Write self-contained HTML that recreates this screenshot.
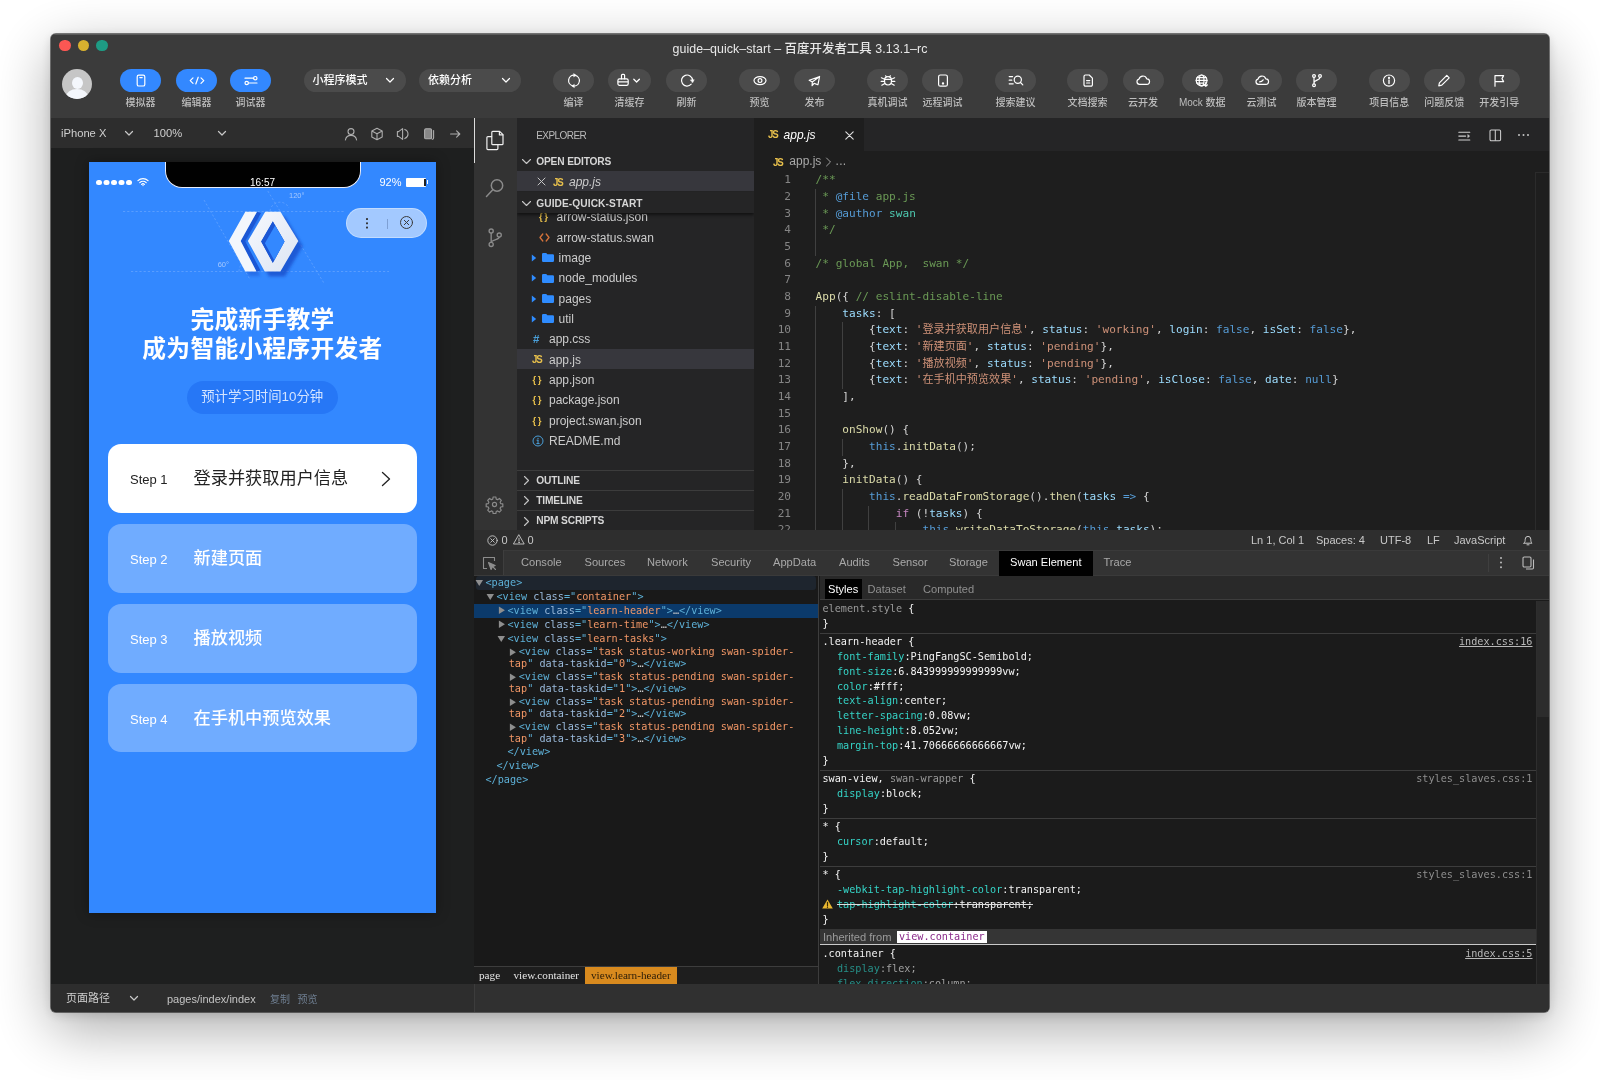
<!DOCTYPE html>
<html lang="zh-CN">
<head>
<meta charset="utf-8">
<title>guide-quick-start – 百度开发者工具 3.13.1-rc</title>
<style>
*{box-sizing:border-box;margin:0;padding:0}
html,body{width:1600px;height:1080px;overflow:hidden;background:#fff}
body{font-family:"Liberation Sans","Noto Sans CJK SC",sans-serif;position:relative;-webkit-font-smoothing:antialiased}
.abs{position:absolute}
#win{position:absolute;left:51px;top:34px;width:1497.500px;height:978px;border-radius:5px;background:#1e1e1e;
 box-shadow:0 0 0 1px rgba(0,0,0,.5),0 17px 58px rgba(0,0,0,.34),0 3px 12px rgba(0,0,0,.14);overflow:hidden;will-change:transform;opacity:.9999}
#win>div{position:absolute}
/* coordinates inside #win are page coords minus (51,34) */
#top{left:0;top:0;width:1498px;height:84px;background:#3b3b3b;box-shadow:inset 0 1px 0 #5a5a5a}
.tl{position:absolute;top:5.5px;width:11.5px;height:11.5px;border-radius:50%}
#title{position:absolute;left:0;width:1498px;top:7.500px;text-align:center;font-size:12.400px;font-weight:500;color:#e8e8e8;line-height:14px;letter-spacing:.06px}
.pill{position:absolute;top:35px;height:23px;border-radius:12px;background:#4b4b4b}
.pill.blue{background:#3388ff}
.pill svg{position:absolute;left:50%;top:50%;transform:translate(-50%,-50%) translateY(-.4px)}
.plab{position:absolute;top:61.700px;width:80px;margin-left:-40px;text-align:center;font-size:10px;font-weight:500;line-height:13px;color:#bdbdbd;white-space:nowrap}
.dd{position:absolute;top:35px;height:23px;width:102px;border-radius:12px;background:#4b4b4b;color:#fff;font-size:11px;font-weight:500;line-height:22.500px;padding-left:9px}
.dd svg{position:absolute;right:10.500px;top:8px}

.sbt{top:8px;font-size:11.200px;line-height:14px;color:#cfcfcf;white-space:nowrap}
#phone{position:absolute;left:38px;top:14px;width:347px;height:751px;background:#3388ff;overflow:hidden;box-shadow:0 0 12px rgba(0,0,0,.35)}
#lh{position:absolute;left:0;top:144.300px;width:347px;text-align:center;color:#fff;font-weight:700;font-size:23.750px;line-height:28.400px;letter-spacing:.28px;font-family:"Liberation Sans","Noto Sans CJK SC",sans-serif}
#lt{position:absolute;left:98px;top:219px;width:150.500px;height:33px;border-radius:16.500px;background:#2677f6;color:#d4e4ff;font-size:13.400px;line-height:32px;text-align:center;white-space:nowrap}
.task{position:absolute;left:19px;width:308.500px;height:68.300px;border-radius:13px;background:rgba(255,255,255,.3);color:#fff}
.task.work{background:#fff;color:#222}
.task:not(.work) .tt{font-weight:500}
.task .st{position:absolute;left:22px;top:0;font-size:13px;line-height:71px;white-space:nowrap}
.task .tt{position:absolute;left:85.500px;top:0;font-size:17.200px;line-height:69px;white-space:nowrap}

/*EDCSS*/
.fn{font-size:12px;line-height:16px;color:#cccccc;white-space:nowrap}
.fi{line-height:14px;white-space:nowrap;font-family:"Liberation Sans",sans-serif}
.sh{font-size:10.200px;font-weight:700;line-height:13px;color:#d6d6d6;white-space:nowrap;letter-spacing:-.15px}
.ln,.cl{position:absolute;font-family:"DejaVu Sans Mono","Liberation Mono","Noto Sans CJK SC",monospace;font-size:11.100px;line-height:16.660px;height:16.660px;white-space:pre;color:#d4d4d4}
.ln{left:0;width:37px;text-align:right;color:#858585}
.cl{left:61.600px}
.cl .c{color:#6a9955}.cl .b{color:#569cd6}.cl .t{color:#4ec9b0}.cl .f{color:#dcdcaa}.cl .v{color:#9cdcfe}.cl .s{color:#ce9178}.cl .m{color:#c586c0}
.stt{top:3px;font-size:11px;line-height:14px;color:#c8c8c8;white-space:nowrap}
/*/EDCSS*/

/*DVCSS*/
.dt{top:5.300px;font-size:11.100px;line-height:14px;color:#a9a9a9;white-space:nowrap}
.dt2{top:32px;font-size:11.100px;line-height:14px;color:#8f8f8f;white-space:nowrap}
.el,.sl{font-family:"DejaVu Sans Mono","Liberation Mono",monospace;font-size:10.180px;white-space:pre}
.el{line-height:12.030px;color:#5db0d7}
.el .tg{color:#5db0d7}.el .an{color:#9bbbdc}.el .av{color:#f29766}.el .dd3{color:#c8c8c8}
.sl{line-height:14.800px;height:14.800px;color:#e6e6e6}
.sl .pn{color:#35d4c7}.sl .pv{color:#f4f4f4}.sl .gs{color:#9a9a9a}.sl .pnd{color:#268f88}.sl .pvd{color:#a0a0a0}
.bc{font-family:"Liberation Serif",serif;font-size:11.200px;line-height:14px;color:#e6e6e6;white-space:nowrap}
/*/DVCSS*/
</style>
</head>
<body>
<div id="win">
<!-- TOPBAR -->
<div id="top">
  <div class="tl" style="left:8px;background:#fc5753"></div>
  <div class="tl" style="left:26.5px;background:#d8b12f"></div>
  <div class="tl" style="left:45px;background:#1e9b84"></div>
  <div id="title">guide–quick–start – 百度开发者工具 3.13.1–rc</div>
  <!--TB--><div class="abs" style="left:11px;top:35px;width:30px;height:30px;border-radius:50%;background:#c6c6c6;overflow:hidden"><div class="abs" style="left:9.5px;top:8px;width:11px;height:12px;border-radius:50%;background:#f4f7fc"></div><div class="abs" style="left:4px;top:19.500px;width:22px;height:16px;border-radius:50% 50% 0 0;background:#f4f7fc"></div></div>
  <div class="pill blue" style="left:69px;width:41px"><svg width="16" height="16" viewBox="0 0 16 16" stroke="#fff" stroke-width="1.2" fill="none" stroke-linecap="round" stroke-linejoin="round"><rect x="4.2" y="2.6" width="7.6" height="10.8" rx="1.6"/><path d="M6.8 5h2.4"/></svg></div><div class="plab" style="left:89.5px">模拟器</div>
  <div class="pill blue" style="left:125px;width:41px"><svg width="18" height="16" viewBox="0 0 18 16" stroke="#fff" stroke-width="1.2" fill="none" stroke-linecap="round" stroke-linejoin="round" stroke-width="1.4"><path d="M5 5.2L2.2 8 5 10.8M13 5.2L15.800 8 13 10.8M10.2 4.600L7.800 11.400"/></svg></div><div class="plab" style="left:145.5px">编辑器</div>
  <div class="pill blue" style="left:179px;width:41px"><svg width="18" height="16" viewBox="0 0 18 16" stroke="#fff" stroke-width="1.2" fill="none" stroke-linecap="round" stroke-linejoin="round" stroke-width="1.3"><path d="M3 5.600h8.600M6.400 10.400H15"/><circle cx="13.300" cy="5.600" r="1.700"/><circle cx="4.700" cy="10.400" r="1.700"/></svg></div><div class="plab" style="left:199.5px">调试器</div>
  <div class="dd" style="left:252.5px">小程序模式<svg width="10" height="7" viewBox="0 0 10 7" stroke="#fff" stroke-width="1.200" fill="none" stroke-linecap="round" stroke-linejoin="round"><path d="M1.500 1.500L5 5l3.500-3.500"/></svg></div>
  <div class="dd" style="left:368px">依赖分析<svg width="10" height="7" viewBox="0 0 10 7" stroke="#fff" stroke-width="1.200" fill="none" stroke-linecap="round" stroke-linejoin="round"><path d="M1.500 1.500L5 5l3.500-3.500"/></svg></div>
  <div class="pill" style="left:502px;width:41px"><svg width="16" height="16" viewBox="0 0 16 16" stroke="#fff" stroke-width="1.2" fill="none" stroke-linecap="round" stroke-linejoin="round" stroke-width="1.100"><path d="M6.600 13.200A5.400 5.400 0 0 1 8.400 2.600M9.400 2.800A5.400 5.400 0 0 1 7.600 13.400"/><path d="M7.900 1.100L10.200 2.700 7.900 4.100zM8.100 11.900L5.800 13.300 8.100 14.900z" fill="#fff" stroke-width=".5"/></svg></div><div class="plab" style="left:522.5px">编译</div>
  <div class="pill" style="left:557px;width:43px"><svg width="26" height="16" viewBox="0 0 26 16" stroke="#fff" stroke-width="1.2" fill="none" stroke-linecap="round" stroke-linejoin="round" stroke-width="1.100"><path d="M4.500 6.200V2.700a.9 .9 0 0 1 .9-.9h1.300a.9 .9 0 0 1 .9 .9V6.200"/><rect x=".9" y="6.200" width="10.300" height="6.600" rx="1.600"/><path d="M1.200 9.200h9.700"/><path d="M16.800 6.600l2.800 2.800 2.800-2.800" stroke-width="1.300"/></svg></div><div class="plab" style="left:578.5px">清缓存</div>
  <div class="pill" style="left:615px;width:41px"><svg width="16" height="16" viewBox="0 0 16 16" stroke="#fff" stroke-width="1.2" fill="none" stroke-linecap="round" stroke-linejoin="round" stroke-width="1.100"><path d="M12.200 11.500A5.500 5.500 0 1 1 13.500 7.600"/><path d="M11.600 7.300L15.200 7.100 13.700 10z" fill="#fff" stroke-width=".5"/></svg></div><div class="plab" style="left:635.5px">刷新</div>
  <div class="pill" style="left:688px;width:41px"><svg width="18" height="16" viewBox="0 0 18 16" stroke="#fff" stroke-width="1.2" fill="none" stroke-linecap="round" stroke-linejoin="round" stroke-width="1.050"><ellipse cx="9" cy="8" rx="6" ry="4"/><circle cx="9" cy="8" r="1.900"/></svg></div><div class="plab" style="left:708.5px">预览</div>
  <div class="pill" style="left:743px;width:41px"><svg width="16" height="16" viewBox="0 0 16 16" stroke="#fff" stroke-width="1.2" fill="none" stroke-linecap="round" stroke-linejoin="round" stroke-width="1.050"><path d="M12.600 3.900L2.200 7.700l3.100 1.800-.2 3.500 2-2.300 3.800 1.500zM5.300 9.500l7.300-5.600"/></svg></div><div class="plab" style="left:763.5px">发布</div>
  <div class="pill" style="left:816px;width:41px"><svg width="18" height="16" viewBox="0 0 18 16" stroke="#fff" stroke-width="1.2" fill="none" stroke-linecap="round" stroke-linejoin="round"><path d="M5.600 7.400A3.400 3.400 0 0 1 12.400 7.400V9A3.400 3.400 0 0 1 5.600 9zM5.800 6.800h6.400M6.600 3.200l1 1.200M11.400 3.200l-1 1.200M2.400 5.200l3.200 1.400M15.600 5.200l-3.200 1.400M2.200 8.800h3.400M15.800 8.800h-3.400M2.800 12.600l3-1.800M15.200 12.600l-3-1.800"/></svg></div><div class="plab" style="left:836.5px">真机调试</div>
  <div class="pill" style="left:871px;width:41px"><svg width="16" height="16" viewBox="0 0 16 16" stroke="#fff" stroke-width="1.2" fill="none" stroke-linecap="round" stroke-linejoin="round"><rect x="3.600" y="2.400" width="8.800" height="11.200" rx="1.800"/><circle cx="8" cy="10.800" r=".6" fill="#fff"/></svg></div><div class="plab" style="left:891.5px">远程调试</div>
  <div class="pill" style="left:944px;width:41px"><svg width="18" height="16" viewBox="0 0 18 16" stroke="#fff" stroke-width="1.2" fill="none" stroke-linecap="round" stroke-linejoin="round"><circle cx="10.800" cy="7.200" r="3.600"/><path d="M13.500 9.900l2.300 2.300M2.200 4h3.400M2.200 7.600h2.600M2.200 11.200h4"/></svg></div><div class="plab" style="left:964.5px">搜索建议</div>
  <div class="pill" style="left:1016px;width:41px"><svg width="16" height="16" viewBox="0 0 16 16" stroke="#fff" stroke-width="1.2" fill="none" stroke-linecap="round" stroke-linejoin="round"><path d="M4 3.800A1.400 1.400 0 0 1 5.400 2.400h3.800L12.400 5.600v6.600a1.400 1.400 0 0 1-1.400 1.400H5.400A1.400 1.400 0 0 1 4 12.200z"/><path d="M6.600 8h3.200M6.600 10.400h3.200"/></svg></div><div class="plab" style="left:1036.5px">文档搜索</div>
  <div class="pill" style="left:1071.5px;width:41px"><svg width="18" height="16" viewBox="0 0 18 16" stroke="#fff" stroke-width="1.2" fill="none" stroke-linecap="round" stroke-linejoin="round"><path d="M5.400 11.800A2.700 2.700 0 0 1 5 6.500 4 4 0 0 1 12.700 6.200 2.800 2.800 0 0 1 12.800 11.800z"/></svg></div><div class="plab" style="left:1092.0px">云开发</div>
  <div class="pill" style="left:1130.75px;width:41px"><svg width="18" height="16" viewBox="0 0 18 16" stroke="#fff" stroke-width="1.2" fill="none" stroke-linecap="round" stroke-linejoin="round"><circle cx="8.600" cy="7.800" r="5.400"/><ellipse cx="8.600" cy="7.800" rx="2.400" ry="5.400"/><path d="M3.200 7.800h10.800M4 5h9.200M4 10.600h6.500M12.800 9.500v4.200M11.200 12.200l1.600 1.600 1.600-1.600" /></svg></div><div class="plab" style="left:1151.25px">Mock 数据</div>
  <div class="pill" style="left:1190px;width:41px"><svg width="18" height="16" viewBox="0 0 18 16" stroke="#fff" stroke-width="1.2" fill="none" stroke-linecap="round" stroke-linejoin="round"><path d="M5.400 11.800A2.700 2.700 0 0 1 5 6.500 4 4 0 0 1 12.700 6.200 2.800 2.800 0 0 1 12.800 11.800z"/><path d="M6.600 9.200c1.400 0 2.600-.6 3.600-2" /></svg></div><div class="plab" style="left:1210.5px">云测试</div>
  <div class="pill" style="left:1245px;width:41px"><svg width="16" height="16" viewBox="0 0 16 16" stroke="#fff" stroke-width="1.2" fill="none" stroke-linecap="round" stroke-linejoin="round"><circle cx="5" cy="3.400" r="1.400"/><circle cx="11" cy="3.400" r="1.400"/><circle cx="5" cy="12.600" r="1.400"/><path d="M5 4.800v6.400M11 4.800c0 3-6 2.400-6 5.400"/></svg></div><div class="plab" style="left:1265.5px">版本管理</div>
  <div class="pill" style="left:1317.75px;width:41px"><svg width="16" height="16" viewBox="0 0 16 16" stroke="#fff" stroke-width="1.2" fill="none" stroke-linecap="round" stroke-linejoin="round"><circle cx="8" cy="8" r="5.600"/><path d="M8 7.400v3.400" stroke-width="1.400"/><circle cx="8" cy="5.300" r=".5" fill="#fff"/></svg></div><div class="plab" style="left:1338.25px">项目信息</div>
  <div class="pill" style="left:1372.75px;width:41px"><svg width="16" height="16" viewBox="0 0 16 16" stroke="#fff" stroke-width="1.2" fill="none" stroke-linecap="round" stroke-linejoin="round"><path d="M10.800 2.800l2.400 2.400-7.400 7.400-3 .6.600-3z"/></svg></div><div class="plab" style="left:1393.25px">问题反馈</div>
  <div class="pill" style="left:1427.75px;width:41px"><svg width="16" height="16" viewBox="0 0 16 16" stroke="#fff" stroke-width="1.2" fill="none" stroke-linecap="round" stroke-linejoin="round"><path d="M4 13.600V3h8.600l-1.600 3 1.600 3H4"/></svg></div><div class="plab" style="left:1448.25px">开发引导</div><!--/TB-->
  
  
  
</div>
<!--SIM-->
<div id="simbar" style="left:0;top:84px;width:423px;height:30px;background:#2d2d2d">
  <span class="abs sbt" style="left:10px">iPhone X</span>
  <svg class="abs" style="left:73px;top:11.500px" width="10" height="7" viewBox="0 0 10 7" stroke="#c8c8c8" stroke-width="1.200" fill="none" stroke-linecap="round" stroke-linejoin="round"><path d="M1.500 1.500L5 5l3.500-3.500"/></svg>
  <span class="abs sbt" style="left:102.500px">100%</span>
  <svg class="abs" style="left:165.500px;top:11.500px" width="10" height="7" viewBox="0 0 10 7" stroke="#c8c8c8" stroke-width="1.200" fill="none" stroke-linecap="round" stroke-linejoin="round"><path d="M1.500 1.500L5 5l3.500-3.500"/></svg>
  <svg class="abs" style="left:292px;top:7.500px" width="16" height="16" viewBox="0 0 16 16" stroke="#adadad" stroke-width="1.100" fill="none" stroke-linecap="round" stroke-linejoin="round"><circle cx="8" cy="5.600" r="3"/><path d="M2.400 14c.6-3 2.800-4.600 5.600-4.600s5 1.600 5.600 4.600"/></svg>
  <svg class="abs" style="left:318px;top:7.500px" width="16" height="16" viewBox="0 0 16 16" stroke="#adadad" stroke-width="1.100" fill="none" stroke-linecap="round" stroke-linejoin="round"><path d="M8 2.200l5.200 2.800v6L8 13.800 2.800 11V5zM2.800 5L8 7.800 13.200 5M8 7.800v6"/></svg>
  <svg class="abs" style="left:344px;top:7.500px" width="16" height="16" viewBox="0 0 16 16" stroke="#adadad" stroke-width="1.100" fill="none" stroke-linecap="round" stroke-linejoin="round"><path d="M7.600 2.600v10.800L3.600 10.400H2.400V5.600h1.200zM9.800 3.400c2 .8 3.200 2.600 3.200 4.600s-1.200 3.800-3.200 4.600"/></svg>
  <svg class="abs" style="left:370px;top:7.500px" width="16" height="16" viewBox="0 0 16 16" stroke="#adadad" stroke-width="1.100" fill="none" stroke-linecap="round" stroke-linejoin="round"><rect x="3.600" y="2.800" width="7" height="10" rx="1.400" fill="#888"/><path d="M12.600 4.600v7.200a1.400 1.400 0 0 1-1.400 1.400"/></svg>
  <svg class="abs" style="left:396px;top:7.500px" width="16" height="16" viewBox="0 0 16 16" stroke="#adadad" stroke-width="1.100" fill="none" stroke-linecap="round" stroke-linejoin="round"><path d="M3.600 8h9M9.600 4.800L12.800 8l-3.200 3.200"/></svg>
</div>
<div id="simbody" style="left:0;top:114px;width:423px;height:836px;background:#1e1f1f">
 <div id="phone">
  <!-- status bar -->
  <div class="abs" style="left:7px;top:17.500px;width:5.600px;height:5.600px;border-radius:50%;background:#fff;box-shadow:7.500px 0 0 #fff,15px 0 0 #fff,22.500px 0 0 #fff,30px 0 0 #fff"></div>
  <svg class="abs" style="left:48px;top:15px" width="12" height="10" viewBox="0 0 12 10" fill="none" stroke="#fff" stroke-width="1.300" stroke-linecap="round"><path d="M1 3.600a7.200 7.200 0 0 1 10 0M2.800 5.600a4.600 4.600 0 0 1 6.400 0M4.600 7.400a2 2 0 0 1 2.800 0"/><circle cx="6" cy="8.600" r=".7" fill="#fff" stroke="none"/></svg>
  <div class="abs" style="left:76.400px;top:-1px;width:195.400px;height:26.500px;background:#000;border:1px solid #e8eefc;border-top:none;border-radius:0 0 17px 17px"></div>
  <div class="abs" style="left:143.500px;top:14.500px;width:60px;text-align:center;font-size:10px;line-height:12px;color:#fff">16:57</div>
  <div class="abs" style="left:285.500px;top:14px;width:27px;text-align:right;font-size:11px;line-height:12px;color:#fff">92%</div>
  <div class="abs" style="left:317px;top:15.500px;width:20px;height:9px;background:#fff;border-radius:1px"></div>
  <div class="abs" style="left:337.500px;top:18px;width:1.500px;height:4px;background:#fff"></div>
  <div class="abs" style="left:335px;top:16.500px;width:1.500px;height:7px;background:#222"></div>
  <!-- hero art -->
  <svg class="abs" style="left:0;top:20px" width="347" height="130" viewBox="0 0 347 130" fill="none">
    <g stroke="#8ebcff" stroke-width=".7" stroke-dasharray="2.200 2" opacity=".6">
      <path d="M34 29.500H256M42 89.500H300"/>
      <path d="M115 18l46 79.500M178.800 9L235.500 102"/>
      <path d="M181 29a10 10 0 0 1 19 -3M150 89.500a11 11 0 0 1 6 -10"/>
    </g>
    <text x="200" y="15.500" font-size="7.500" fill="#a4c8ff" font-family="Liberation Sans, sans-serif">120°</text>
    <text x="128.700" y="85" font-size="7.500" fill="#a4c8ff" font-family="Liberation Sans, sans-serif">60°</text>
    <!-- shadows -->
    <defs>
      <linearGradient id="lg1" x1="0" y1="0" x2="1" y2="1"><stop offset="0" stop-color="#f6f8fd"/><stop offset="1" stop-color="#dde5f3"/></linearGradient>
      <clipPath id="hc"><path d="M183.800 39.200L195.500 59.500 183.800 80.900 172.100 59.500z"/></clipPath>
      <filter id="bl" x="-20%" y="-20%" width="150%" height="150%"><feGaussianBlur stdDeviation="1.600"/></filter>
    </defs>
    <path d="M176.200 29.700H191.400L209.300 59 191.400 89.600H175.700L158.900 59z" transform="translate(4.500 5)" fill="#164bc8" opacity=".75" filter="url(#bl)"/>
    <path d="M156.300 29.700H168L151.700 59l15.800 30.600H156.300L139.800 59z" transform="translate(4 4.500)" fill="#1850cf" opacity=".45" filter="url(#bl)"/>
    <!-- chevron side -->
    <path d="M168 29.700l4 1.300L156.200 59.300 171.500 88.400 167.500 89.600 151.700 59z" fill="#1b56d4"/>
    <!-- chevron -->
    <path d="M156.300 29.700H168L151.700 59l15.800 30.600H156.300L139.800 59z" fill="#f3f6fc"/>
    <!-- hex ring -->
    <path fill-rule="evenodd" d="M176.200 29.700H191.400L209.300 59 191.400 89.600H175.700L158.900 59zM183.800 39.200L195.500 59.500 183.800 80.900 172.100 59.500z" fill="url(#lg1)"/>
    <g clip-path="url(#hc)"><path d="M183.800 39.200L195.500 59.500 183.800 80.900 172.100 59.500z" fill="#1b56d4"/><path d="M183.800 39.200L195.500 59.500 183.800 80.900 172.100 59.500z" transform="translate(3.800 1.800)" fill="#3388ff"/></g>
  </svg>
  <!-- capsule -->
  <div class="abs" style="left:257px;top:46px;width:81px;height:30px;border-radius:15px;background:rgba(255,255,255,.55);border:.5px solid rgba(255,255,255,.35)">
    <div class="abs" style="left:19.200px;top:9.200px;width:1.700px;height:1.700px;border-radius:50%;background:#333;box-shadow:0 4.300px 0 #333,0 8.600px 0 #333"></div>
    <div class="abs" style="left:39.500px;top:9.500px;width:.6px;height:10.500px;background:rgba(90,120,170,.5)"></div>
    <svg class="abs" style="left:52px;top:6.300px" width="15" height="15" viewBox="0 0 15 15" fill="none" stroke="#3a3a3a" stroke-width="1" stroke-linecap="round"><circle cx="7.500" cy="7.500" r="6"/><path d="M5.300 5.300l4.400 4.400M9.700 5.300l-4.400 4.400"/></svg>
  </div>
  <!-- header -->
  <div id="lh">完成新手教学<br>成为智能小程序开发者</div>
  <div id="lt">预计学习时间10分钟</div>
  <div class="task work" style="top:282.300px"><span class="st">Step 1</span><span class="tt">登录并获取用户信息</span>
    <svg class="abs" style="left:272px;top:26px" width="12" height="18" viewBox="0 0 12 18" fill="none" stroke="#222" stroke-width="1.300" stroke-linecap="round" stroke-linejoin="round"><path d="M2.500 2.500L9.500 9l-7 6.500"/></svg></div>
  <div class="task" style="top:362.400px"><span class="st">Step 2</span><span class="tt">新建页面</span></div>
  <div class="task" style="top:442.300px"><span class="st">Step 3</span><span class="tt">播放视频</span></div>
  <div class="task" style="top:522px"><span class="st">Step 4</span><span class="tt">在手机中预览效果</span></div>
 </div>
</div>
<div id="simfoot" style="left:0;top:950px;width:1498px;height:28px;background:#2d2d2d">
  <div class="abs footdiv" style="left:422.500px;top:0;width:1px;height:28px;background:#3c3c3c"></div><div class="abs" style="left:423.500px;top:0;width:1075px;height:28px;background:#303030"></div>
  <span class="abs" style="left:15px;top:8.200px;font-size:11px;line-height:13px;color:#d0d0d0">页面路径</span>
  <svg class="abs" style="left:78px;top:11px" width="10" height="7" viewBox="0 0 10 7" stroke="#c8c8c8" stroke-width="1.200" fill="none" stroke-linecap="round" stroke-linejoin="round"><path d="M1.500 1.500L5 5l3.500-3.500"/></svg>
  <span class="abs" style="left:116px;top:8.600px;font-size:11px;line-height:13px;color:#c4c4c4">pages/index/index</span>
  <span class="abs" style="left:219px;top:8.600px;font-size:10px;line-height:13px;color:#6f7f92">复制</span>
  <span class="abs" style="left:246.500px;top:8.600px;font-size:10px;line-height:13px;color:#6f7f92">预览</span>
</div>
<!--/SIM-->
<!--EDITOR-->
<div id="act" style="left:423px;top:84px;width:43.250px;height:412px;background:#333333">
<div class="abs" style="left:0;top:0;width:1px;height:45px;background:#dcdcdc"></div>
<svg class="abs" style="left:0px;top:0px" width="43" height="45" viewBox="0 0 43 45" fill="none" stroke-linecap="round" stroke-linejoin="round" stroke="#f0f0f0" stroke-width="1.200"><path d="M18.800 13.300h6.800l3.400 3.400v9a1 1 0 0 1-1 1h-9.200a1 1 0 0 1-1-1v-11.400a1 1 0 0 1 1-1z"/><path d="M25.400 13.500v3.400h3.400"/><path d="M17.600 18.600h-3.700a1 1 0 0 0-1 1v11a1 1 0 0 0 1 1h9a1 1 0 0 0 1-1v-3.700"/></svg>
<svg class="abs" style="left:9px;top:58px" width="24" height="24" viewBox="0 0 24 24" fill="none" stroke-linecap="round" stroke-linejoin="round" stroke="#8a8a8a" stroke-width="1.500"><circle cx="14" cy="9.500" r="5.700"/><path d="M9.800 13.700L3.500 20.500"/></svg>
<svg class="abs" style="left:10.300px;top:108.500px" width="21.500" height="21.500" viewBox="0 0 24 24" fill="none" stroke-linecap="round" stroke-linejoin="round" stroke="#8a8a8a" stroke-width="1.500"><circle cx="8" cy="4.500" r="2.300"/><circle cx="8" cy="19.500" r="2.300"/><circle cx="17" cy="9" r="2.300"/><path d="M8 6.800v10.400M17 11.300c0 3.500-9 2.500-9 5.900"/></svg>
<svg class="abs" style="left:11.300px;top:376.500px" width="19" height="19" viewBox="0 0 24 24" fill="none" stroke-linecap="round" stroke-linejoin="round" stroke="#8a8a8a" stroke-width="1.500"><circle cx="12" cy="12" r="2.600"/><path d="M10.300 2.500h3.400l.5 2.700 1.700.7 2.300-1.500 2.400 2.400-1.500 2.300.7 1.700 2.700.5v3.400l-2.700.5-.7 1.700 1.500 2.300-2.400 2.400-2.300-1.500-1.700.7-.5 2.700h-3.400l-.5-2.700-1.700-.7-2.300 1.500-2.400-2.400 1.500-2.300-.7-1.700-2.700-.5v-3.400l2.700-.5.700-1.700-1.500-2.300 2.400-2.400 2.300 1.500 1.700-.7z"/></svg>
</div>
<div id="side" style="left:466.25px;top:84px;width:236.75px;height:412px;background:#252526;overflow:hidden">
<div class="abs" style="left:18.95px;top:11px;font-size:10px;line-height:13px;color:#bbb;letter-spacing:-.55px">EXPLORER</div>
<div class="abs" style="left:0;top:88.3px;width:237px;height:20.36px;"></div>
<span class="abs fi" style="left:21.75px;top:92.18px;color:#e8c04c;font-size:9.500px;font-weight:700;letter-spacing:1.500px">{}</span>
<span class="abs fn" style="left:39.25px;top:91.18px">arrow-status.json</span>
<div class="abs" style="left:0;top:108.66px;width:237px;height:20.36px;"></div>
<svg class="abs" style="left:21.75px;top:115.04px" width="11" height="9" viewBox="0 0 11 9" fill="none" stroke="#d6733a" stroke-width="1.300" stroke-linecap="round" stroke-linejoin="round"><path d="M3.800 1L1 4.500 3.800 8M7.200 1L10 4.500 7.200 8"/></svg>
<span class="abs fn" style="left:39.25px;top:111.54px">arrow-status.swan</span>
<div class="abs" style="left:0;top:129.02px;width:237px;height:20.36px;"></div>
<svg class="abs" style="left:13.25px;top:135.9px" width="6" height="8" viewBox="0 0 6 8"><path d="M.8 .6L5.200 4 .8 7.400z" fill="#2f8cff"/></svg>
<svg class="abs" style="left:24.25px;top:135.4px" width="12" height="9" viewBox="0 0 12 9"><path d="M0 1.200A1.200 1.200 0 0 1 1.200 0h3l1.200 1.300h5.400A1.200 1.200 0 0 1 12 2.500v5.300A1.200 1.200 0 0 1 10.800 9H1.200A1.200 1.200 0 0 1 0 7.800z" fill="#2f8cff"/></svg>
<span class="abs fn" style="left:41.35px;top:131.90px">image</span>
<div class="abs" style="left:0;top:149.38px;width:237px;height:20.36px;"></div>
<svg class="abs" style="left:13.25px;top:156.26px" width="6" height="8" viewBox="0 0 6 8"><path d="M.8 .6L5.200 4 .8 7.400z" fill="#2f8cff"/></svg>
<svg class="abs" style="left:24.25px;top:155.76px" width="12" height="9" viewBox="0 0 12 9"><path d="M0 1.200A1.200 1.200 0 0 1 1.200 0h3l1.200 1.300h5.400A1.200 1.200 0 0 1 12 2.500v5.300A1.200 1.200 0 0 1 10.800 9H1.200A1.200 1.200 0 0 1 0 7.800z" fill="#2f8cff"/></svg>
<span class="abs fn" style="left:41.35px;top:152.26px">node_modules</span>
<div class="abs" style="left:0;top:169.74px;width:237px;height:20.36px;"></div>
<svg class="abs" style="left:13.25px;top:176.62px" width="6" height="8" viewBox="0 0 6 8"><path d="M.8 .6L5.200 4 .8 7.400z" fill="#2f8cff"/></svg>
<svg class="abs" style="left:24.25px;top:176.12px" width="12" height="9" viewBox="0 0 12 9"><path d="M0 1.200A1.200 1.200 0 0 1 1.200 0h3l1.200 1.300h5.400A1.200 1.200 0 0 1 12 2.500v5.300A1.200 1.200 0 0 1 10.800 9H1.200A1.200 1.200 0 0 1 0 7.800z" fill="#2f8cff"/></svg>
<span class="abs fn" style="left:41.35px;top:172.62px">pages</span>
<div class="abs" style="left:0;top:190.1px;width:237px;height:20.36px;"></div>
<svg class="abs" style="left:13.25px;top:196.98px" width="6" height="8" viewBox="0 0 6 8"><path d="M.8 .6L5.200 4 .8 7.400z" fill="#2f8cff"/></svg>
<svg class="abs" style="left:24.25px;top:196.48px" width="12" height="9" viewBox="0 0 12 9"><path d="M0 1.200A1.200 1.200 0 0 1 1.200 0h3l1.200 1.300h5.400A1.200 1.200 0 0 1 12 2.500v5.300A1.200 1.200 0 0 1 10.800 9H1.200A1.200 1.200 0 0 1 0 7.800z" fill="#2f8cff"/></svg>
<span class="abs fn" style="left:41.35px;top:192.98px">util</span>
<div class="abs" style="left:0;top:210.46px;width:237px;height:20.36px;"></div>
<span class="abs fi" style="left:15.75px;top:214.34px;color:#4a9fd8;font-size:11.500px;font-weight:700">#</span>
<span class="abs fn" style="left:31.75px;top:213.34px">app.css</span>
<div class="abs" style="left:0;top:230.82px;width:237px;height:20.36px; background:#37373d;"></div>
<span class="abs fi" style="left:14.75px;top:234.39999999999998px;color:#e8c04c;font-size:10.500px;font-weight:700;letter-spacing:-1.100px;transform:scaleX(.92);transform-origin:0 0">JS</span>
<span class="abs fn" style="left:31.75px;top:233.70px">app.js</span>
<div class="abs" style="left:0;top:251.18px;width:237px;height:20.36px;"></div>
<span class="abs fi" style="left:15.25px;top:255.06px;color:#e8c04c;font-size:9.500px;font-weight:700;letter-spacing:1.500px">{}</span>
<span class="abs fn" style="left:31.75px;top:254.06px">app.json</span>
<div class="abs" style="left:0;top:271.54px;width:237px;height:20.36px;"></div>
<span class="abs fi" style="left:15.25px;top:275.42px;color:#e8c04c;font-size:9.500px;font-weight:700;letter-spacing:1.500px">{}</span>
<span class="abs fn" style="left:31.75px;top:274.42px">package.json</span>
<div class="abs" style="left:0;top:291.9px;width:237px;height:20.36px;"></div>
<span class="abs fi" style="left:15.25px;top:295.78px;color:#e8c04c;font-size:9.500px;font-weight:700;letter-spacing:1.500px">{}</span>
<span class="abs fn" style="left:31.75px;top:294.78px">project.swan.json</span>
<div class="abs" style="left:0;top:312.26px;width:237px;height:20.36px;"></div>
<svg class="abs" style="left:14.25px;top:317.14px" width="12" height="12" viewBox="0 0 12 12" fill="none" stroke="#4a9fd8" stroke-width="1"><circle cx="6" cy="6" r="5"/><path d="M6 5.200v3.400M4.800 8.600h2.400M5 5.200h1" stroke-linecap="round"/><circle cx="6" cy="3.400" r=".6" fill="#4a9fd8" stroke="none"/></svg>
<span class="abs fn" style="left:31.75px;top:315.14px">README.md</span>
<div class="abs" style="left:0;top:33px;width:237px;height:20.600px;background:#252526"></div>
<svg class="abs" style="left:3.75px;top:38px" width="11" height="11" viewBox="0 0 11 11" fill="none" stroke="#c5c5c5" stroke-width="1.100" stroke-linecap="round" stroke-linejoin="round"><path d="M1.500 3.500L5.500 7.500l4-4"/></svg>
<span class="abs sh" style="left:18.95px;top:36.7px">OPEN EDITORS</span>
<div class="abs" style="left:0;top:52.8px;width:237px;height:20.600px;background:#37373d"></div>
<svg class="abs" style="left:19.75px;top:58.8px" width="9" height="9" viewBox="0 0 9 9" stroke="#c5c5c5" stroke-width="1" stroke-linecap="round"><path d="M1 1l7 7M8 1L1 8"/></svg>
<span class="abs fi" style="left:35.75px;top:56.7px;color:#e8c04c;font-size:10.500px;font-weight:700;letter-spacing:-1.100px;transform:scaleX(.92);transform-origin:0 0">JS</span>
<span class="abs fn" style="left:51.75px;top:56px;font-style:italic">app.js</span>
<div class="abs" style="left:0;top:74.4px;width:237px;height:20.600px;background:#252526;box-shadow:0 2px 3px rgba(0,0,0,.55)"></div>
<svg class="abs" style="left:3.75px;top:79.7px" width="11" height="11" viewBox="0 0 11 11" fill="none" stroke="#c5c5c5" stroke-width="1.100" stroke-linecap="round" stroke-linejoin="round"><path d="M1.500 3.500L5.500 7.500l4-4"/></svg>
<span class="abs sh" style="left:18.95px;top:78.5px;letter-spacing:.08px">GUIDE-QUICK-START</span>
<div class="abs" style="left:0;top:351.6px;width:237px;height:20.400px;background:#252526;border-top:1px solid #3c3c3c"></div>
<svg class="abs" style="left:3.25px;top:356.8px" width="11" height="11" viewBox="0 0 11 11" fill="none" stroke="#c5c5c5" stroke-width="1.100" stroke-linecap="round" stroke-linejoin="round"><path d="M3.500 1.500L7.500 5.500l-4 4"/></svg>
<span class="abs sh" style="left:18.95px;top:355.7px">OUTLINE</span>
<div class="abs" style="left:0;top:371.96px;width:237px;height:20.400px;background:#252526;border-top:1px solid #3c3c3c"></div>
<svg class="abs" style="left:3.25px;top:377.16px" width="11" height="11" viewBox="0 0 11 11" fill="none" stroke="#c5c5c5" stroke-width="1.100" stroke-linecap="round" stroke-linejoin="round"><path d="M3.500 1.500L7.500 5.500l-4 4"/></svg>
<span class="abs sh" style="left:18.95px;top:376.06px">TIMELINE</span>
<div class="abs" style="left:0;top:392.3px;width:237px;height:20.400px;background:#252526;border-top:1px solid #3c3c3c"></div>
<svg class="abs" style="left:3.25px;top:397.5px" width="11" height="11" viewBox="0 0 11 11" fill="none" stroke="#c5c5c5" stroke-width="1.100" stroke-linecap="round" stroke-linejoin="round"><path d="M3.500 1.500L7.500 5.500l-4 4"/></svg>
<span class="abs sh" style="left:18.95px;top:396.4px">NPM SCRIPTS</span>
</div>
<div id="ed" style="left:703px;top:84px;width:795px;height:412px;background:#1e1e1e;overflow:hidden">
<div class="abs" style="left:0;top:0;width:795px;height:32.600px;background:#252526"></div>
<div class="abs" style="left:0;top:0;width:110px;height:32.600px;background:#1e1e1e"></div>
<span class="abs" style="left:13.5px;top:11px;color:#e8c04c;font-size:10.500px;font-weight:700;line-height:11px;letter-spacing:-1.100px;transform:scaleX(.92);transform-origin:0 0">JS</span>
<span class="abs" style="left:29.6px;top:9.500px;color:#fff;font-size:12px;line-height:15px;font-style:italic">app.js</span>
<svg class="abs" style="left:91px;top:12.500px" width="9" height="9" viewBox="0 0 9 9" stroke="#e0e0e0" stroke-width="1.100" stroke-linecap="round"><path d="M.8 .8l7.400 7.400M8.200 .8L.8 8.200"/></svg>
<svg class="abs" style="left:703px;top:11.600px" width="14" height="12" viewBox="0 0 14 12" stroke="#cfcfcf" stroke-width="1.100" fill="none" stroke-linecap="round"><path d="M1.800 2.200h11M1.800 6.100h6.800M1.800 10h11"/><path d="M11 4.800L12.600 6.100 11 7.400z" fill="#cfcfcf" stroke-width=".6"/></svg>
<svg class="abs" style="left:734.5px;top:10.900px" width="13" height="13" viewBox="0 0 13 13" stroke="#cfcfcf" stroke-width="1.050" fill="none"><rect x="1" y="1" width="10.600" height="10.800" rx="1.200"/><path d="M6.300 1v10.800"/></svg>
<div class="abs" style="left:764px;top:16px;width:2px;height:2px;border-radius:50%;background:#c5c5c5;box-shadow:4.500px 0 0 #c5c5c5,9px 0 0 #c5c5c5"></div>
<span class="abs" style="left:19px;top:38.5px;color:#e8c04c;font-size:10.500px;font-weight:700;line-height:11px;letter-spacing:-1.100px;transform:scaleX(.92);transform-origin:0 0">JS</span>
<span class="abs" style="left:35.3px;top:36.3px;color:#a9a9a9;font-size:12px;line-height:15px">app.js</span>
<svg class="abs" style="left:70.5px;top:39.3px" width="7" height="10" viewBox="0 0 7 10" stroke="#a0a0a0" stroke-width="1" fill="none" stroke-linecap="round" stroke-linejoin="round"><path d="M1.500 1L5.500 5l-4 4"/></svg>
<span class="abs" style="left:81.5px;top:36px;color:#a9a9a9;font-size:12px;line-height:15px;letter-spacing:.3px">...</span>
<div class="ln" style="top:54.40px">1</div><div class="cl" style="top:54.40px"><span class="c">/**</span></div>
<div class="ln" style="top:71.06px">2</div><div class="cl" style="top:71.06px"><span class="c"> * </span><span class="b">@file</span><span class="c"> app.js</span></div>
<div class="ln" style="top:87.72px">3</div><div class="cl" style="top:87.72px"><span class="c"> * </span><span class="b">@author</span><span class="c"> </span><span class="t">swan</span></div>
<div class="ln" style="top:104.38px">4</div><div class="cl" style="top:104.38px"><span class="c"> */</span></div>
<div class="ln" style="top:121.04px">5</div><div class="cl" style="top:121.04px"></div>
<div class="ln" style="top:137.70px">6</div><div class="cl" style="top:137.70px"><span class="c">/* global App,  swan */</span></div>
<div class="ln" style="top:154.36px">7</div><div class="cl" style="top:154.36px"></div>
<div class="ln" style="top:171.02px">8</div><div class="cl" style="top:171.02px"><span class="f">App</span>({ <span class="c">// eslint-disable-line</span></div>
<div class="ln" style="top:187.68px">9</div><div class="cl" style="top:187.68px">    <span class="v">tasks</span>: [</div>
<div class="ln" style="top:204.34px">10</div><div class="cl" style="top:204.34px">        {<span class="v">text</span>: <span class="s">'登录并获取用户信息'</span>, <span class="v">status</span>: <span class="s">'working'</span>, <span class="v">login</span>: <span class="b">false</span>, <span class="v">isSet</span>: <span class="b">false</span>},</div>
<div class="ln" style="top:221.00px">11</div><div class="cl" style="top:221.00px">        {<span class="v">text</span>: <span class="s">'新建页面'</span>, <span class="v">status</span>: <span class="s">'pending'</span>},</div>
<div class="ln" style="top:237.66px">12</div><div class="cl" style="top:237.66px">        {<span class="v">text</span>: <span class="s">'播放视频'</span>, <span class="v">status</span>: <span class="s">'pending'</span>},</div>
<div class="ln" style="top:254.32px">13</div><div class="cl" style="top:254.32px">        {<span class="v">text</span>: <span class="s">'在手机中预览效果'</span>, <span class="v">status</span>: <span class="s">'pending'</span>, <span class="v">isClose</span>: <span class="b">false</span>, <span class="v">date</span>: <span class="b">null</span>}</div>
<div class="ln" style="top:270.98px">14</div><div class="cl" style="top:270.98px">    ],</div>
<div class="ln" style="top:287.64px">15</div><div class="cl" style="top:287.64px"></div>
<div class="ln" style="top:304.30px">16</div><div class="cl" style="top:304.30px">    <span class="f">onShow</span>() {</div>
<div class="ln" style="top:320.96px">17</div><div class="cl" style="top:320.96px">        <span class="b">this</span>.<span class="f">initData</span>();</div>
<div class="ln" style="top:337.62px">18</div><div class="cl" style="top:337.62px">    },</div>
<div class="ln" style="top:354.28px">19</div><div class="cl" style="top:354.28px">    <span class="f">initData</span>() {</div>
<div class="ln" style="top:370.94px">20</div><div class="cl" style="top:370.94px">        <span class="b">this</span>.<span class="f">readDataFromStorage</span>().<span class="f">then</span>(<span class="v">tasks</span> <span class="b">=&gt;</span> {</div>
<div class="ln" style="top:387.60px">21</div><div class="cl" style="top:387.60px">            <span class="m">if</span> (!<span class="v">tasks</span>) {</div>
<div class="ln" style="top:404.26px">22</div><div class="cl" style="top:404.26px">                <span class="b">this</span>.<span class="f">writeDataToStorage</span>(<span class="b">this</span>.<span class="v">tasks</span>);</div>
<div class="abs" style="left:60.9px;top:71.06px;width:1px;height:66.64px;background:#404040"></div>
<div class="abs" style="left:60.9px;top:187.68px;width:1px;height:233.24px;background:#404040"></div>
<div class="abs" style="left:87.7px;top:204.34px;width:1px;height:66.64px;background:#404040"></div>
<div class="abs" style="left:87.7px;top:320.96px;width:1px;height:16.66px;background:#404040"></div>
<div class="abs" style="left:87.7px;top:370.94px;width:1px;height:49.98px;background:#404040"></div>
<div class="abs" style="left:114.4px;top:387.60px;width:1px;height:33.32px;background:#404040"></div>
<div class="abs" style="left:141.2px;top:404.26px;width:1px;height:16.66px;background:#404040"></div>
<div class="abs" style="left:781px;top:53.5px;width:1px;height:360px;background:#2b2b2b"></div>
<div class="abs" style="left:781px;top:53.5px;width:14px;height:1px;background:#2b2b2b"></div>
</div>
<div id="stat" style="left:423px;top:496px;width:1075px;height:20px;background:#2e2e2e">
<svg class="abs" style="left:12.5px;top:4.500px" width="11" height="11" viewBox="0 0 11 11" stroke="#c8c8c8" stroke-width=".9" fill="none" stroke-linecap="round"><circle cx="5.500" cy="5.500" r="4.700"/><path d="M3.700 3.700l3.600 3.600M7.300 3.700L3.700 7.300"/></svg>
<span class="abs stt" style="left:27.5px">0</span>
<svg class="abs" style="left:38.5px;top:4px" width="12" height="11" viewBox="0 0 12 11" stroke="#c8c8c8" stroke-width=".9" fill="none" stroke-linecap="round" stroke-linejoin="round"><path d="M6 1L11.200 10H.8zM6 4.200v3"/><circle cx="6" cy="8.500" r=".3"/></svg>
<span class="abs stt" style="left:53.5px">0</span>
<span class="abs stt" style="left:777px">Ln 1, Col 1</span>
<span class="abs stt" style="left:842px">Spaces: 4</span>
<span class="abs stt" style="left:906px">UTF-8</span>
<span class="abs stt" style="left:953px">LF</span>
<span class="abs stt" style="left:980px">JavaScript</span>
<svg class="abs" style="left:1047.5px;top:4px" width="12" height="12" viewBox="0 0 12 12" stroke="#c8c8c8" stroke-width="1" fill="none" stroke-linecap="round" stroke-linejoin="round"><path d="M2 9.200h8c-1-1-1.200-2-1.200-4a2.800 2.800 0 0 0-5.600 0c0 2-.2 3-1.200 4zM5 10.800h2"/></svg>
</div>
<!--/EDITOR-->
<!--DEVTOOLS-->
<div id="dev" style="left:423px;top:516px;width:1075px;height:434px;background:#191919;overflow:hidden">
<div class="abs" style="left:0;top:0;width:1075px;height:25.700px;background:#333;border-bottom:1px solid #3a3a3a;border-top:1px solid #3a3a3a"></div>
<div class="abs" style="left:0;top:0;width:29.500px;height:25px;background:#2c2c2c;border-right:1px solid #3e3e3e"></div>
<svg class="abs" style="left:8px;top:5.500px" width="15" height="15" viewBox="0 0 15 15" fill="none" stroke="#8d8d8d" stroke-width="1.100" stroke-linejoin="round"><path d="M12.500 5V1.500h-11v11H5" stroke-dasharray="none"/><path d="M6.500 6.500l2.600 7 1.300-2.800 2.800-1.300z" fill="#8d8d8d"/><path d="M10.500 10.500l3 3" stroke-linecap="round"/></svg>
<span class="abs dt" style="left:47px">Console</span>
<span class="abs dt" style="left:110.5px">Sources</span>
<span class="abs dt" style="left:173px">Network</span>
<span class="abs dt" style="left:237px">Security</span>
<span class="abs dt" style="left:299px">AppData</span>
<span class="abs dt" style="left:365px">Audits</span>
<span class="abs dt" style="left:418.5px">Sensor</span>
<span class="abs dt" style="left:475px">Storage</span>
<div class="abs" style="left:525px;top:1px;width:94px;height:24.700px;background:#000"></div>
<span class="abs dt" style="left:536px;color:#fff">Swan Element</span>
<span class="abs dt" style="left:629.5px">Trace</span>
<div class="abs" style="left:1014px;top:4px;width:1px;height:18px;background:#3f3f3f"></div>
<div class="abs" style="left:1026.3px;top:7px;width:2.200px;height:2.200px;border-radius:50%;background:#bdbdbd;box-shadow:0 4.600px 0 #bdbdbd,0 9.200px 0 #bdbdbd"></div>
<svg class="abs" style="left:1047.5px;top:5.500px" width="13" height="14" viewBox="0 0 13 14" fill="none" stroke="#bdbdbd" stroke-width="1.100" stroke-linejoin="round"><rect x="1" y="1" width="8" height="10" rx="1.200"/><path d="M11.500 3.500v8.300a1.200 1.200 0 0 1-1.200 1.200H4"/></svg>
<div class="abs" style="left:1.500px;top:26.1px;width:340px;height:13.600px;background:#1e252e;border-radius:3px"></div>
<svg class="abs" style="left:0.7px;top:29.20px" width="8.500" height="7.500" viewBox="0 0 8 7"><path d="M.5 .8h7L4 6.500z" fill="#8e8e8e"/></svg>
<div class="abs el" style="left:11.5px;top:26.90px"><span class="tg">&lt;page</span><span class="tg">&gt;</span></div>
<svg class="abs" style="left:11.7px;top:43.10px" width="8.500" height="7.500" viewBox="0 0 8 7"><path d="M.5 .8h7L4 6.500z" fill="#8e8e8e"/></svg>
<div class="abs el" style="left:22.5px;top:40.80px"><span class="tg">&lt;view</span> <span class="an">class</span><span class="tg">="</span><span class="av">container</span><span class="tg">"</span><span class="tg">&gt;</span></div>
<div class="abs" style="left:0;top:53.8px;width:344.500px;height:13.800px;background:#0b3a6b"></div>
<svg class="abs" style="left:23.8px;top:56.20px" width="7.500" height="8.500" viewBox="0 0 7 8"><path d="M.8 .5v7L6.500 4z" fill="#8e8e8e"/></svg>
<div class="abs el" style="left:33.5px;top:54.70px"><span class="tg">&lt;view</span> <span class="an">class</span><span class="tg">="</span><span class="av">learn-header</span><span class="tg">"</span><span class="tg">&gt;</span><span class="dd3">…</span><span class="tg">&lt;/view&gt;</span></div>
<svg class="abs" style="left:23.8px;top:70.10px" width="7.500" height="8.500" viewBox="0 0 7 8"><path d="M.8 .5v7L6.500 4z" fill="#8e8e8e"/></svg>
<div class="abs el" style="left:33.5px;top:68.60px"><span class="tg">&lt;view</span> <span class="an">class</span><span class="tg">="</span><span class="av">learn-time</span><span class="tg">"</span><span class="tg">&gt;</span><span class="dd3">…</span><span class="tg">&lt;/view&gt;</span></div>
<svg class="abs" style="left:22.7px;top:84.80px" width="8.500" height="7.500" viewBox="0 0 8 7"><path d="M.5 .8h7L4 6.500z" fill="#8e8e8e"/></svg>
<div class="abs el" style="left:33.5px;top:82.50px"><span class="tg">&lt;view</span> <span class="an">class</span><span class="tg">="</span><span class="av">learn-tasks</span><span class="tg">"</span><span class="tg">&gt;</span></div>
<svg class="abs" style="left:35.05px;top:97.80px" width="7.500" height="8.500" viewBox="0 0 7 8"><path d="M.8 .5v7L6.500 4z" fill="#8e8e8e"/></svg>
<div class="abs el" style="left:44.75px;top:96.30px"><span class="tg">&lt;view</span> <span class="an">class</span><span class="tg">="</span><span class="av">task status-working swan-spider-</span><br><span style="margin-left:-10px"><span class="av">tap</span><span class="tg">"</span> <span class="an">data-taskid</span><span class="tg">="</span><span class="av">0</span><span class="tg">"&gt;</span><span class="dd3">…</span><span class="tg">&lt;/view&gt;</span></span></div>
<svg class="abs" style="left:35.05px;top:122.80px" width="7.500" height="8.500" viewBox="0 0 7 8"><path d="M.8 .5v7L6.500 4z" fill="#8e8e8e"/></svg>
<div class="abs el" style="left:44.75px;top:121.30px"><span class="tg">&lt;view</span> <span class="an">class</span><span class="tg">="</span><span class="av">task status-pending swan-spider-</span><br><span style="margin-left:-10px"><span class="av">tap</span><span class="tg">"</span> <span class="an">data-taskid</span><span class="tg">="</span><span class="av">1</span><span class="tg">"&gt;</span><span class="dd3">…</span><span class="tg">&lt;/view&gt;</span></span></div>
<svg class="abs" style="left:35.05px;top:147.80px" width="7.500" height="8.500" viewBox="0 0 7 8"><path d="M.8 .5v7L6.500 4z" fill="#8e8e8e"/></svg>
<div class="abs el" style="left:44.75px;top:146.30px"><span class="tg">&lt;view</span> <span class="an">class</span><span class="tg">="</span><span class="av">task status-pending swan-spider-</span><br><span style="margin-left:-10px"><span class="av">tap</span><span class="tg">"</span> <span class="an">data-taskid</span><span class="tg">="</span><span class="av">2</span><span class="tg">"&gt;</span><span class="dd3">…</span><span class="tg">&lt;/view&gt;</span></span></div>
<svg class="abs" style="left:35.05px;top:172.80px" width="7.500" height="8.500" viewBox="0 0 7 8"><path d="M.8 .5v7L6.500 4z" fill="#8e8e8e"/></svg>
<div class="abs el" style="left:44.75px;top:171.30px"><span class="tg">&lt;view</span> <span class="an">class</span><span class="tg">="</span><span class="av">task status-pending swan-spider-</span><br><span style="margin-left:-10px"><span class="av">tap</span><span class="tg">"</span> <span class="an">data-taskid</span><span class="tg">="</span><span class="av">3</span><span class="tg">"&gt;</span><span class="dd3">…</span><span class="tg">&lt;/view&gt;</span></span></div>
<div class="abs el" style="left:33.5px;top:196.30px"><span class="tg">&lt;/view&gt;</span></div>
<div class="abs el" style="left:22.5px;top:210.20px"><span class="tg">&lt;/view&gt;</span></div>
<div class="abs el" style="left:11.5px;top:224.10px"><span class="tg">&lt;/page&gt;</span></div>
<div class="abs" style="left:0;top:416px;width:344.500px;height:18px;background:#1e1e1e;border-top:1px solid #3d3d3d"></div>
<span class="abs bc" style="left:5px;top:417.5px">page</span>
<span class="abs bc" style="left:39.5px;top:417.5px">view.container</span>
<div class="abs" style="left:111px;top:417px;width:91.700px;height:17px;background:#d88a1e"></div>
<span class="abs bc" style="left:117px;top:417.5px;color:#2a1c08">view.learn-header</span>
<div class="abs" style="left:343.8px;top:25.700px;width:1px;height:410px;background:#3d3d3d"></div>
<div class="abs" style="left:344.8px;top:50px;width:731px;height:384px;background:#1b1b1b"></div>
<div class="abs" style="left:345.5px;top:25.700px;width:730px;height:24.700px;background:#292929;border-bottom:1px solid #3d3d3d"></div>
<div class="abs" style="left:350.5px;top:29.3px;width:37.500px;height:20px;background:#000"></div>
<span class="abs dt2" style="left:354px;color:#fff">Styles</span>
<span class="abs dt2" style="left:393.5px">Dataset</span>
<span class="abs dt2" style="left:449px">Computed</span>
<div class="abs sl" style="left:348.5px;top:51.70px;"><span class="gs">element.style</span> <span class="pv">{</span></div>
<div class="abs sl" style="left:348.5px;top:66.50px;"><span class="pv">}</span></div>
<div class="abs" style="left:345.5px;top:83px;width:716px;height:1px;background:#3d3d3d"></div>
<div class="abs sl" style="left:348.5px;top:85.20px;"><span class="pv">.learn-header {</span></div>
<div class="abs sl" style="right:16.5px;top:85.20px;text-decoration:underline;color:#b8b8b8">index.css:16</div>
<div class="abs sl" style="left:363px;top:100.00px;"><span class="pn">font-family</span><span class="pv">:PingFangSC-Semibold;</span></div>
<div class="abs sl" style="left:363px;top:114.80px;"><span class="pn">font-size</span><span class="pv">:6.843999999999999vw;</span></div>
<div class="abs sl" style="left:363px;top:129.60px;"><span class="pn">color</span><span class="pv">:#fff;</span></div>
<div class="abs sl" style="left:363px;top:144.40px;"><span class="pn">text-align</span><span class="pv">:center;</span></div>
<div class="abs sl" style="left:363px;top:159.20px;"><span class="pn">letter-spacing</span><span class="pv">:0.08vw;</span></div>
<div class="abs sl" style="left:363px;top:174.00px;"><span class="pn">line-height</span><span class="pv">:8.052vw;</span></div>
<div class="abs sl" style="left:363px;top:188.80px;"><span class="pn">margin-top</span><span class="pv">:41.70666666666667vw;</span></div>
<div class="abs sl" style="left:348.5px;top:203.60px;"><span class="pv">}</span></div>
<div class="abs" style="left:345.5px;top:220px;width:716px;height:1px;background:#3d3d3d"></div>
<div class="abs sl" style="left:348.5px;top:222.20px;"><span class="pv">swan-view, </span><span class="gs">swan-wrapper</span><span class="pv"> {</span></div>
<div class="abs sl" style="right:16.5px;top:222.20px;color:#8f8f8f">styles_slaves.css:1</div>
<div class="abs sl" style="left:363px;top:237.00px;"><span class="pn">display</span><span class="pv">:block;</span></div>
<div class="abs sl" style="left:348.5px;top:251.80px;"><span class="pv">}</span></div>
<div class="abs" style="left:345.5px;top:268.3px;width:716px;height:1px;background:#3d3d3d"></div>
<div class="abs sl" style="left:348.5px;top:270.20px;"><span class="pv">* {</span></div>
<div class="abs sl" style="left:363px;top:285.00px;"><span class="pn">cursor</span><span class="pv">:default;</span></div>
<div class="abs sl" style="left:348.5px;top:299.80px;"><span class="pv">}</span></div>
<div class="abs" style="left:345.5px;top:316.3px;width:716px;height:1px;background:#3d3d3d"></div>
<div class="abs sl" style="left:348.5px;top:318.20px;"><span class="pv">* {</span></div>
<div class="abs sl" style="right:16.5px;top:318.20px;color:#8f8f8f">styles_slaves.css:1</div>
<div class="abs sl" style="left:363px;top:333.00px;"><span class="pn">-webkit-tap-highlight-color</span><span class="pv">:transparent;</span></div>
<div class="abs sl" style="left:363px;top:347.80px;text-decoration:line-through;text-decoration-color:#ddd;"><span class="pn">tap-highlight-color</span><span class="pv">:transparent;</span></div>
<svg class="abs" style="left:348px;top:348.8px" width="11" height="10" viewBox="0 0 11 10"><path d="M5.500 .4L10.800 9.600H.2z" fill="#e8b630"/><path d="M5.500 3.400v3.400" stroke="#3a2a00" stroke-width="1.200" stroke-linecap="round"/><circle cx="5.500" cy="8.200" r=".7" fill="#3a2a00"/></svg>
<div class="abs sl" style="left:348.5px;top:362.60px;"><span class="pv">}</span></div>
<div class="abs" style="left:345.5px;top:379px;width:716px;height:16px;background:#353535;border-bottom:1.500px solid #c9c9c9"></div>
<span class="abs" style="left:349px;top:380px;font-size:11.100px;line-height:14px;color:#9a9a9a;white-space:nowrap">Inherited from</span>
<div class="abs sl" style="left:422.5px;top:381px;height:12px;line-height:12px;background:#fff;color:#8a2a8a;padding:0 2.500px">view.container</div>
<div class="abs sl" style="left:348.5px;top:397.20px;"><span class="pv">.container {</span></div>
<div class="abs sl" style="right:16.5px;top:397.20px;text-decoration:underline;color:#b8b8b8">index.css:5</div>
<div class="abs sl" style="left:363px;top:412.00px;"><span class="pnd">display</span><span class="pvd">:flex;</span></div>
<div class="abs sl" style="left:363px;top:426.80px;"><span class="pnd">flex-direction</span><span class="pvd">:column;</span></div>
<div class="abs" style="left:1061.5px;top:50.7px;width:14px;height:384px;background:#212121;border-left:1px solid #2e2e2e"></div>
<div class="abs" style="left:1062.5px;top:50.7px;width:13px;height:116px;background:#2c2c2c"></div>
</div>
<!--/DEVTOOLS-->
</div>
</body>
</html>
